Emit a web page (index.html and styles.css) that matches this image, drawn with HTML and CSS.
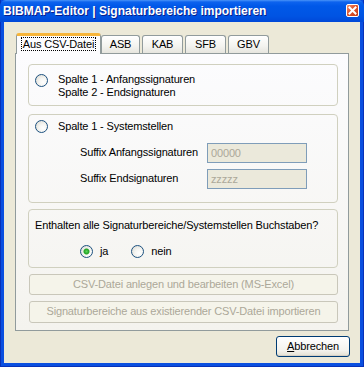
FILE: index.html
```html
<!DOCTYPE html>
<html>
<head>
<meta charset="utf-8">
<title>BIBMAP-Editor | Signaturbereiche importieren</title>
<link rel="stylesheet" href="styles.css">
</head>
<body>
<div class="window">
 <div class="titlebar">
  <span class="title">BIBMAP-Editor | Signaturbereiche importieren</span>
  <span class="close">
   <svg width="13" height="13" viewBox="0 0 13 13"><path d="M3.5 3.5 L9.5 9.5 M9.5 3.5 L3.5 9.5" stroke="#fff" stroke-width="2" stroke-linecap="square"/></svg>
  </span>
 </div>
 <div class="client">
  <div class="tabs">
   <div class="tab active"><span class="focus">Aus CSV-Datei</span></div>
   <div class="tab asb">ASB</div>
   <div class="tab">KAB</div>
   <div class="tab">SFB</div>
   <div class="tab">GBV</div>
  </div>
  <div class="page">
   <div class="group g1">
    <div class="radio"><span class="dot"></span><span>Spalte 1 - Anfangssignaturen<br>Spalte 2 - Endsignaturen</span></div>
   </div>
   <div class="group g2">
    <div class="radio"><span class="dot"></span><span>Spalte 1 - Systemstellen</span></div>
    <div class="field first"><span class="lbl">Suffix Anfangssignaturen</span><span class="input">00000</span></div>
    <div class="field"><span class="lbl">Suffix Endsignaturen</span><span class="input">zzzzz</span></div>
   </div>
   <div class="group g3">
    <div class="question">Enthalten alle Signaturbereiche/Systemstellen Buchstaben?</div>
    <div class="choices">
     <div class="radio"><span class="dot checked"></span><span>ja</span></div>
     <div class="radio"><span class="dot"></span><span>nein</span></div>
    </div>
   </div>
   <div class="btn disabled">CSV-Datei anlegen und bearbeiten (MS-Excel)</div>
   <div class="btn disabled second">Signaturbereiche aus existierender CSV-Datei importieren</div>
  </div>
  <div class="footer">
   <div class="btn cancel"><u>A</u>bbrechen</div>
  </div>
 </div>
</div>
</body>
</html>
```

FILE: styles.css
```css
body{
 margin:0;
 font-family:"Liberation Sans", Arial, sans-serif;
 font-size:11px;
 letter-spacing:-0.15px;
 color:#000;
}
.window{
 width:364px;
 height:367px;
 background:#0a4fe0;
 box-shadow:inset 1px 0 #0831b8, inset -1px 0 #0831b8, inset 0 -1px #0831b8;
 overflow:hidden;
}
.titlebar{
 height:22px;
 display:flex;
 align-items:center;
 justify-content:space-between;
 padding:0 5px 0 3px;
 background:linear-gradient(#4a94f8 0, #0d63ee 2px, #0058e8 6px, #0054e3 16px, #0048d8 22px);
 border-radius:6px 6px 0 0;
}
.title{
 font-family:"Liberation Sans", sans-serif;
 font-weight:bold;
 font-size:12px;
 letter-spacing:0;
 color:#fff;
 text-shadow:1px 1px #0a1e8c;
 padding-bottom:1px;
}
.close{
 width:13px;
 height:13px;
 box-sizing:border-box;
 border:1px solid #fff;
 border-radius:2px;
 background:linear-gradient(135deg, #f09070, #e0542c 45%, #c23a17);
 display:flex;
 margin-bottom:1px;
}
.close svg{
 margin:-1px;
}
.client{
 margin:0 4px 4px;
 height:341px;
 box-sizing:border-box;
 background:#ece9d8;
 padding:11px 11px 0;
}
.tabs{
 display:flex;
 align-items:flex-end;
 height:20px;
 padding-left:1px;
 position:relative;
 z-index:1;
}
.tab{
 height:18px;
 box-sizing:border-box;
 width:41px;
 margin-right:2px;
 border:1px solid #919b9c;
 border-bottom:none;
 border-radius:3px 3px 0 0;
 background:linear-gradient(#fff, #f3f3ef 60%, #e6e5de);
 text-align:center;
 line-height:17px;
}
.tab.asb{
 width:39px;
}
.tab.active{
 width:85px;
 height:21px;
 margin-right:0;
 margin-bottom:-1px;
 background:#fcfcfe;
 border-top:3px solid #f7b53a;
 border-radius:3px 3px 0 0;
 line-height:14px;
 padding-top:1px;
}
.focus{
 border:1px dotted #000;
 padding:0 1px;
}
.page{
 height:278px;
 box-sizing:border-box;
 border:1px solid #919b9c;
 background:linear-gradient(#fcfcfe, #f4f3ee);
 padding:10px 10px 0 12px;
}
.group{
 border:1px solid #d0d0bf;
 border-radius:4px;
 box-sizing:border-box;
 width:310px;
}
.g1{
 height:42px;
 padding:8px 6px;
}
.g2{
 height:89px;
 margin-top:8px;
 padding:5px 6px;
}
.g3{
 height:59px;
 margin-top:6px;
 padding:9px 6px;
}
.radio{
 display:flex;
 align-items:flex-start;
 line-height:13px;
}
.dot{
 width:13px;
 height:13px;
 box-sizing:border-box;
 border:1px solid #1c5180;
 border-radius:50%;
 background:radial-gradient(circle at 65% 65%, #fff 0, #f5f5f2 40%, #d7d6cd 100%);
 margin-right:10px;
 flex:none;
}
.g1 .dot{
 margin-top:1px;
}
.g2 .radio{
 align-items:center;
}
.dot.checked{
 background:radial-gradient(circle, #5cd65c 0, #21a121 2.5px, transparent 3.5px), radial-gradient(circle at 65% 65%, #fff 0, #f5f5f2 40%, #d7d6cd 100%);
}
.field{
 display:flex;
 align-items:center;
 margin-top:6px;
 padding-left:45px;
}
.field.first{
 margin-top:10px;
}
.lbl{
 width:127px;
 padding-bottom:3px;
}
.input{
 width:100px;
 height:20px;
 box-sizing:border-box;
 border:1px solid #7f9db9;
 background:#ebe9db;
 color:#aca899;
 padding:2px 3px 0;
 line-height:15px;
}
.question{
 line-height:13px;
}
.choices{
 display:flex;
 margin-top:13px;
 padding-left:45px;
}
.choices .radio{
 align-items:center;
 margin-right:23px;
}
.choices .dot{
 margin-right:7px;
}
.btn{
 box-sizing:border-box;
 border:1px solid #c9c7ba;
 border-radius:3px;
 text-align:center;
}
.btn.disabled{
 width:309px;
 height:21px;
 margin:6px 0 0 1px;
 color:#aca899;
 background:#f5f4ea;
 line-height:19px;
}
.btn.second{
 margin-top:6px;
 height:22px;
}
.footer{
 display:flex;
 justify-content:flex-end;
 padding:5px 0 0;
 margin-right:-1px;
}
.btn.cancel{
 width:74px;
 height:21px;
 border-color:#003c74;
 background:linear-gradient(#fff, #f4f3ee 70%, #e3e0d2);
 box-shadow:inset 0 -1px #d6d0c5;
 line-height:19px;
}
```
